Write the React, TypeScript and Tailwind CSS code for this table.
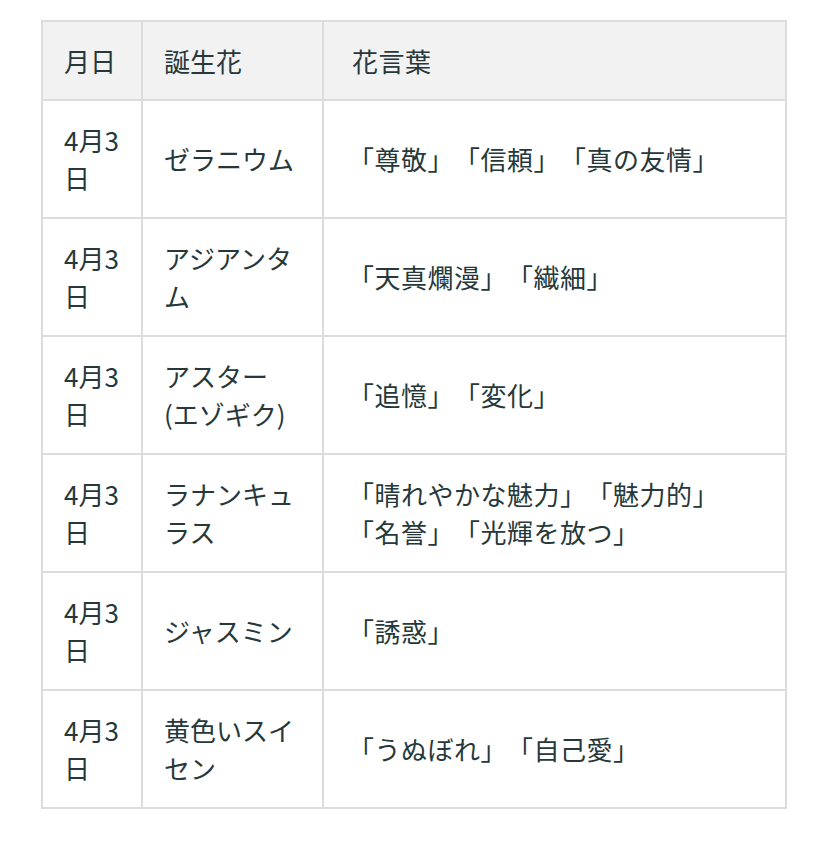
const rows: { date: string; flower: string; words: string[] }[] = [
  { date: '4月3日', flower: 'ゼラニウム', words: ['「尊敬」', '「信頼」', '「真の友情」'] },
  { date: '4月3日', flower: 'アジアンタム', words: ['「天真爛漫」', '「繊細」'] },
  { date: '4月3日', flower: 'アスター(エゾギク)', words: ['「追憶」', '「変化」'] },
  {
    date: '4月3日',
    flower: 'ラナンキュラス',
    words: ['「晴れやかな魅力」', '「魅力的」', '「名誉」', '「光輝を放つ」'],
  },
  { date: '4月3日', flower: 'ジャスミン', words: ['「誘惑」'] },
  { date: '4月3日', flower: '黄色いスイセン', words: ['「うぬぼれ」', '「自己愛」'] },
];

export default function App() {
  return (
    <div
      className="min-h-[843px] bg-white pl-[41px] pt-[20px] text-[26px] leading-[38px] text-[#26383a] [text-spacing-trim:space-all]"
      style={{ fontFamily: '"Noto Sans CJK JP", "Noto Sans", sans-serif' }}
    >
      <table className="w-[746px] table-fixed border-collapse border-2 border-[#dcdcdc]">
        <colgroup>
          <col className="w-[100px]" />
          <col className="w-[181px]" />
          <col />
        </colgroup>
        <thead>
          <tr className="bg-[#f2f2f2]">
            <th className="border-2 border-[#dcdcdc] px-[21px] pb-[19px] pt-[20px] text-left font-normal">月日</th>
            <th className="border-2 border-[#dcdcdc] px-[21px] pb-[19px] pt-[20px] text-left font-normal">誕生花</th>
            <th className="border-2 border-[#dcdcdc] pb-[19px] pl-[28px] pr-[21px] pt-[20px] text-left font-normal tracking-[0.5px]">花言葉</th>
          </tr>
        </thead>
        <tbody>
          {rows.map((r, i) => (
            <tr key={i}>
              <td className="h-[118px] border-2 border-[#dcdcdc] px-[21px] py-[20px] align-middle">{r.date}</td>
              <td className="border-2 border-[#dcdcdc] px-[21px] py-[20px] align-middle">{r.flower}</td>
              <td className="border-2 border-[#dcdcdc] py-[20px] pl-[24px] pr-[21px] align-middle tracking-[0.5px]">
                {r.words.map((w) => (
                  <span key={w} className="whitespace-nowrap">
                    {w}
                  </span>
                ))}
              </td>
            </tr>
          ))}
        </tbody>
      </table>
    </div>
  );
}
